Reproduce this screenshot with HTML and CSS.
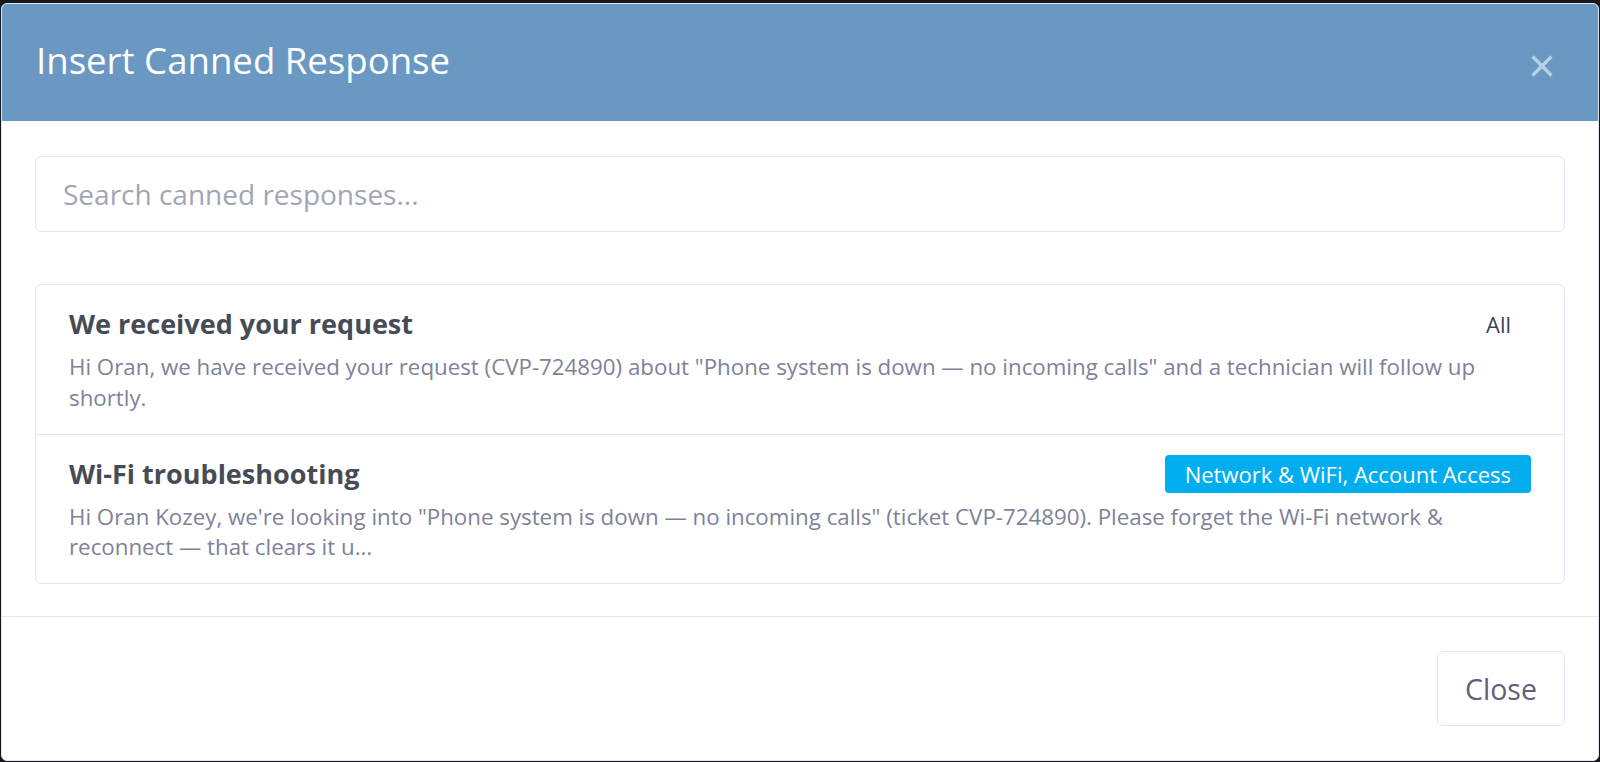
FILE: index.html
```html
<!DOCTYPE html>
<html lang="en">
<head>
    <meta charset="UTF-8">
    <meta name="viewport" content="width=device-width, initial-scale=1.0">
    <title>Insert Canned Response</title>
    <link rel="stylesheet" href="styles.css">
</head>
<body>
    <div class="modal">
        <div class="modal-header">
            <h2 class="modal-title">Insert Canned Response</h2>
            <button type="button" class="btn-close" aria-label="Close">
                <svg width="24" height="24" viewBox="0 0 24 24"><path d="M2.5 2.5 L21.5 21.5 M21.5 2.5 L2.5 21.5"/></svg>
            </button>
        </div>
        <div class="modal-body">
            <input type="text" class="search" placeholder="Search canned responses...">
            <div class="response-list">
                <div class="response-item">
                    <div class="response-head">
                        <span class="response-title">We received your request</span>
                        <span class="tag tag-plain">All</span>
                    </div>
                    <p class="response-text">Hi Oran, we have received your request (CVP-724890) about "Phone system is down — no incoming calls" and a technician will follow up shortly.</p>
                </div>
                <div class="response-item">
                    <div class="response-head">
                        <span class="response-title">Wi-Fi troubleshooting</span>
                        <span class="tag tag-info">Network &amp; WiFi, Account Access</span>
                    </div>
                    <p class="response-text">Hi Oran Kozey, we're looking into "Phone system is down — no incoming calls" (ticket CVP-724890). Please forget the Wi-Fi network &amp; reconnect — that clears it u...</p>
                </div>
            </div>
        </div>
        <div class="modal-footer">
            <button type="button" class="btn-light">Close</button>
        </div>
    </div>
</body>
</html>
```

FILE: styles.css
```css
body {
    margin: 0;
    background: #16161e;
    font-family: "Open Sans", "Liberation Sans", sans-serif;
}
.modal {
    margin: 3px 1px 0;
    background: #fff;
    border: 1px solid #e4e6ef;
    border-radius: 6px;
    overflow: hidden;
}
.modal-header {
    display: flex;
    justify-content: space-between;
    align-items: flex-start;
    background: #6a98c2;
    padding: 35px 34px 39px;
}
.modal-title {
    margin: 0;
    color: #fff;
    font-size: 36.6px;
    font-weight: 500;
    line-height: 43px;
}
.btn-close {
    margin: 5px 0 -6px;
    padding: 10px;
    background: none;
    border: none;
    cursor: pointer;
    line-height: 0;
}
.btn-close svg {
    stroke: #bcd0e4;
    stroke-width: 3.2;
    fill: none;
}
.modal-body {
    padding: 35px 33px 32px;
}
.search {
    display: block;
    box-sizing: border-box;
    width: 100%;
    height: 76px;
    margin: 0 0 52px;
    padding: 0 27px;
    border: 1px solid #e4e6ef;
    border-radius: 6px;
    font-family: inherit;
    font-size: 28px;
    color: #3f4254;
    outline: none;
}
.search::placeholder {
    color: #a1a5b7;
}
.response-list {
    border: 1px solid #e4e6ef;
    border-radius: 6px;
}
.response-item {
    padding: 20px 33px 20.5px;
}
.response-item + .response-item {
    border-top: 1px solid #e4e6ef;
}
.response-head {
    display: flex;
    justify-content: space-between;
    align-items: center;
    min-height: 38px;
    margin-bottom: 9px;
}
.response-title {
    color: #464c55;
    font-size: 27px;
    font-weight: 700;
    line-height: 38px;
}
.tag {
    padding: 0 20px;
    height: 38px;
    line-height: 38px;
    border-radius: 4px;
    font-size: 22px;
}
.tag-plain {
    color: #3f4254;
}
.tag-info {
    background: #00aeef;
    color: #fff;
}
.response-text {
    margin: 0;
    color: #7e8299;
    font-size: 22.3px;
    line-height: 30.5px;
}
.modal-footer {
    display: flex;
    justify-content: flex-end;
    border-top: 1px solid #e4e6ef;
    padding: 34px 33px 34px;
}
.btn-light {
    width: 128px;
    height: 75px;
    background: #fff;
    border: 1px solid #e4e6ef;
    border-radius: 6px;
    color: #5e6278;
    font-family: inherit;
    font-size: 28.5px;
    cursor: pointer;
}
```
